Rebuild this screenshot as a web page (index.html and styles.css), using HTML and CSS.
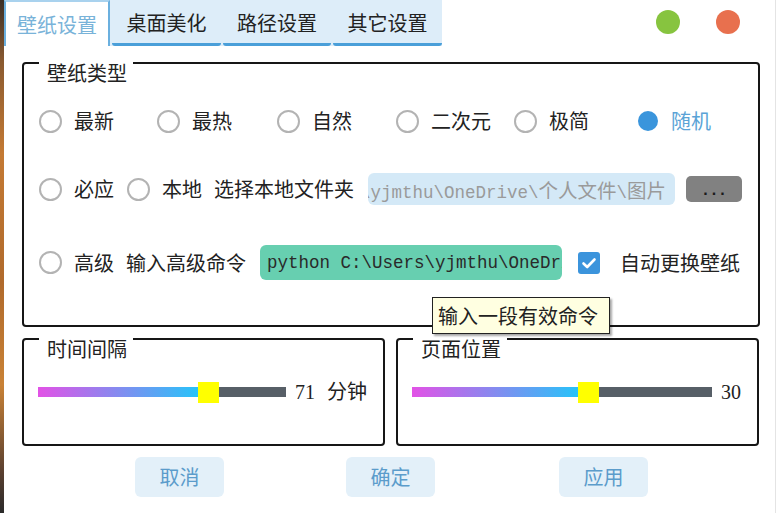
FILE: index.html
```html
<!DOCTYPE html>
<html lang="zh">
<head>
<meta charset="utf-8">
<title>壁纸设置</title>
<link rel="stylesheet" href="styles.css">
</head>
<body>
<div class="desk">
  <div class="strip"></div>
  <div class="window">
    <div class="header">
      <div class="tabs">
        <div class="tab active t1">壁纸设置</div>
        <div class="tab t2">桌面美化</div>
        <div class="tab t3">路径设置</div>
        <div class="tab t2">其它设置</div>
      </div>
      <div class="dots">
        <span class="dot green"></span>
        <span class="dot red"></span>
      </div>
    </div>

    <div class="content">
      <div class="group g1">
        <div class="gtitle">壁纸类型</div>
        <div class="row r1">
          <div class="radio"><span class="circle"></span><span class="lbl">最新</span></div>
          <div class="radio"><span class="circle"></span><span class="lbl">最热</span></div>
          <div class="radio"><span class="circle"></span><span class="lbl">自然</span></div>
          <div class="radio"><span class="circle"></span><span class="lbl">二次元</span></div>
          <div class="radio"><span class="circle"></span><span class="lbl">极简</span></div>
          <div class="radio"><span class="circle on"></span><span class="lbl blue">随机</span></div>
        </div>
        <div class="row r2">
          <div class="radio"><span class="circle"></span><span class="lbl">必应</span></div>
          <div class="radio m13"><span class="circle"></span><span class="lbl">本地</span></div>
          <span class="lbl m12">选择本地文件夹</span>
          <div class="pathbox"><span>C:\Users\yjmthu\OneDrive\<span class="cjk">个人文件</span>\<span class="cjk">图片</span></span></div>
          <div class="browse">...</div>
        </div>
        <div class="row r3">
          <div class="radio"><span class="circle"></span><span class="lbl">高级</span></div>
          <span class="lbl m12">输入高级命令</span>
          <div class="cmdbox">python C:\Users\yjmthu\OneDrive\wallpaper.py</div>
          <span class="check"><svg width="22" height="22" viewBox="0 0 22 22"><path d="M5.5 11.5 L9.2 15 L16.5 7.5" fill="none" stroke="#fff" stroke-width="2.6" stroke-linecap="round" stroke-linejoin="round"/></svg></span>
          <span class="lbl m20">自动更换壁纸</span>
        </div>
      </div>

      <div class="pair">
        <div class="group g2">
          <div class="gtitle">时间间隔</div>
          <div class="slider">
            <div class="track w248">
              <div class="fill" style="width:160px"></div>
              <div class="handle" style="left:160px"></div>
            </div>
            <span class="val"><span class="num">71</span>分钟</span>
          </div>
        </div>
        <div class="group g3">
          <div class="gtitle">页面位置</div>
          <div class="slider">
            <div class="track w300">
              <div class="fill" style="width:166px"></div>
              <div class="handle" style="left:166px"></div>
            </div>
            <span class="val"><span class="num">30</span></span>
          </div>
        </div>
      </div>

      <div class="buttons">
        <div class="btn">取消</div>
        <div class="btn b2">确定</div>
        <div class="btn b3">应用</div>
      </div>
    </div>

    <div class="tooltip">输入一段有效命令</div>
  </div>
</div>
</body>
</html>
```

FILE: styles.css
```css
* { box-sizing: border-box; }
html, body { margin: 0; padding: 0; }
body {
  width: 776px;
  height: 513px;
  overflow: hidden;
  font-family: "Noto Sans CJK SC", "Noto Sans", sans-serif;
  font-size: 20px;
  color: #222;
  background: #fff;
}
.desk { display: flex; width: 776px; height: 513px; }
.strip {
  width: 5px;
  background: linear-gradient(to bottom, #3c3028 0%, #8a5a30 12%, #c47a34 30%, #b06a2c 55%, #c98236 75%, #5a4030 92%, #2a2a2a 100%);
}
.window {
  position: relative;
  flex: 1;
  background: #fff;
  border-right: 1px solid #e4e4e4;
}

/* header */
.header { display: flex; height: 46px; align-items: flex-start; }
.tabs {
  display: flex;
  gap: 2px;
  height: 46px;
  background: #ddedf9;
}
.tab {
  height: 46px;
  display: flex;
  align-items: center;
  justify-content: center;
  padding-top: 2px;
  border-bottom: 3px solid #4a9fd9;
  border-radius: 0 0 3px 3px;
  color: #222;
  line-height: 1;
}
.t1 { width: 106px; }
.t2 { width: 109px; }
.t3 { width: 108px; }
.tab.active {
  background: #fff;
  color: #79b3d9;
  border: 2px solid #6bb0df;
  border-bottom: 0;
  border-top-color: #a9d2ee;
  border-radius: 0;
  padding-top: 1px;
}
.dots { display: flex; gap: 36px; margin-left: auto; margin-right: 35px; margin-top: 10px; }
.dot { width: 24px; height: 24px; border-radius: 50%; display: block; }
.green { background: #87c43f; }
.red { background: #e8704e; }

/* content */
.content { padding: 16px 15px 0 18px; }
.group {
  position: relative;
  border: 2px solid #161616;
  border-radius: 4px;
}
.gtitle {
  position: absolute;
  top: -4px;
  left: 15px;
  height: 25px;
  line-height: 26px;
  padding: 0 6px 0 8px;
  background: #fff;
  color: #222;
}
.g1 { height: 265px; padding: 40px 16px 0 15px; }
.row { display: flex; align-items: center; }
.r1 {
  height: 34px;
  display: grid;
  grid-template-columns: 118px 120px 119px 118px 122px auto;
  align-items: center;
}
.r2 { height: 34px; margin-top: 34px; }
.r3 { height: 35px; margin-top: 39px; }
.radio { display: flex; align-items: center; }
.circle {
  width: 23px;
  height: 23px;
  border: 2px solid #b3b3b3;
  border-radius: 50%;
  margin-right: 12px;
  flex: none;
}
.circle.on {
  width: 20px;
  height: 20px;
  border: 0;
  background: #3a95dc;
  margin: 0 13px 0 2px;
}
.lbl { line-height: 1; white-space: nowrap; }
.blue { color: #5aa3d6; }
.m13 { margin-left: 13px; }
.m12 { margin-left: 12px; }
.m20 { margin-left: 20px; }

.pathbox {
  width: 307px;
  height: 32px;
  margin-left: 14px;
  border-radius: 6px;
  background: #d4e9f7;
  overflow: hidden;
  display: flex;
  justify-content: flex-end;
  align-items: center;
  padding-right: 9px;
  font-family: "Liberation Mono", "Noto Sans CJK SC", monospace;
  font-size: 17.5px;
  color: #9a9a9a;
  white-space: nowrap;
}
.pathbox > span { flex: none; }
.cjk { font-family: "Noto Sans CJK SC", sans-serif; font-size: 19.5px; }
.browse {
  width: 56px;
  height: 26px;
  margin-left: 11px;
  border-radius: 5px;
  background: #818181;
  color: #1a1a1a;
  font-family: "Liberation Sans", sans-serif;
  font-size: 16px;
  font-weight: bold;
  letter-spacing: 4px;
  text-align: center;
  line-height: 28px;
  padding-left: 4px;
}
.cmdbox {
  width: 302px;
  height: 35px;
  margin-left: 14px;
  border-radius: 6px;
  background: #67cfb0;
  overflow: hidden;
  white-space: nowrap;
  padding-left: 7px;
  line-height: 37px;
  font-family: "Liberation Mono", monospace;
  font-size: 17.5px;
  color: #2a2a2a;
}
.check {
  width: 22px;
  height: 22px;
  margin-left: 16px;
  border-radius: 3px;
  background: #3b94dc;
  display: block;
}
.check svg { display: block; }

/* lower groups */
.pair { display: flex; gap: 11px; margin-top: 11px; }
.g2, .g3 { width: 363px; height: 108px; padding: 41px 0 0 14px; }
.slider { display: flex; align-items: center; height: 21px; }
.track {
  position: relative;
  height: 10px;
  background: #575f67;
  flex: none;
}
.w248 { width: 248px; }
.w300 { width: 300px; }
.fill {
  height: 10px;
  background: linear-gradient(to right, #e252e6, #27c3f9);
}
.handle {
  position: absolute;
  top: -5px;
  width: 21px;
  height: 21px;
  background: #ffff00;
}
.val { margin-left: 9px; line-height: 1; white-space: nowrap; }
.num {
  font-family: "Liberation Serif", serif;
  font-size: 20px;
  margin-right: 12px;
}
.g3 .num { margin-right: 0; }

/* buttons */
.buttons { display: flex; margin-top: 11px; padding-left: 113px; }
.btn {
  width: 89px;
  height: 40px;
  border-radius: 6px;
  background: #e3f0f9;
  color: #5b9ccb;
  display: flex;
  align-items: center;
  justify-content: center;
  line-height: 1;
}
.b2 { margin-left: 122px; }
.b3 { margin-left: 124px; }

/* tooltip */
.tooltip {
  position: absolute;
  left: 428px;
  top: 297px;
  width: 178px;
  height: 37px;
  border: 1px solid #222;
  background: #ffffe1;
  box-shadow: 2px 2px 2px rgba(0,0,0,0.35);
  padding-left: 5px;
  line-height: 35px;
  color: #222;
  white-space: nowrap;
}
```
